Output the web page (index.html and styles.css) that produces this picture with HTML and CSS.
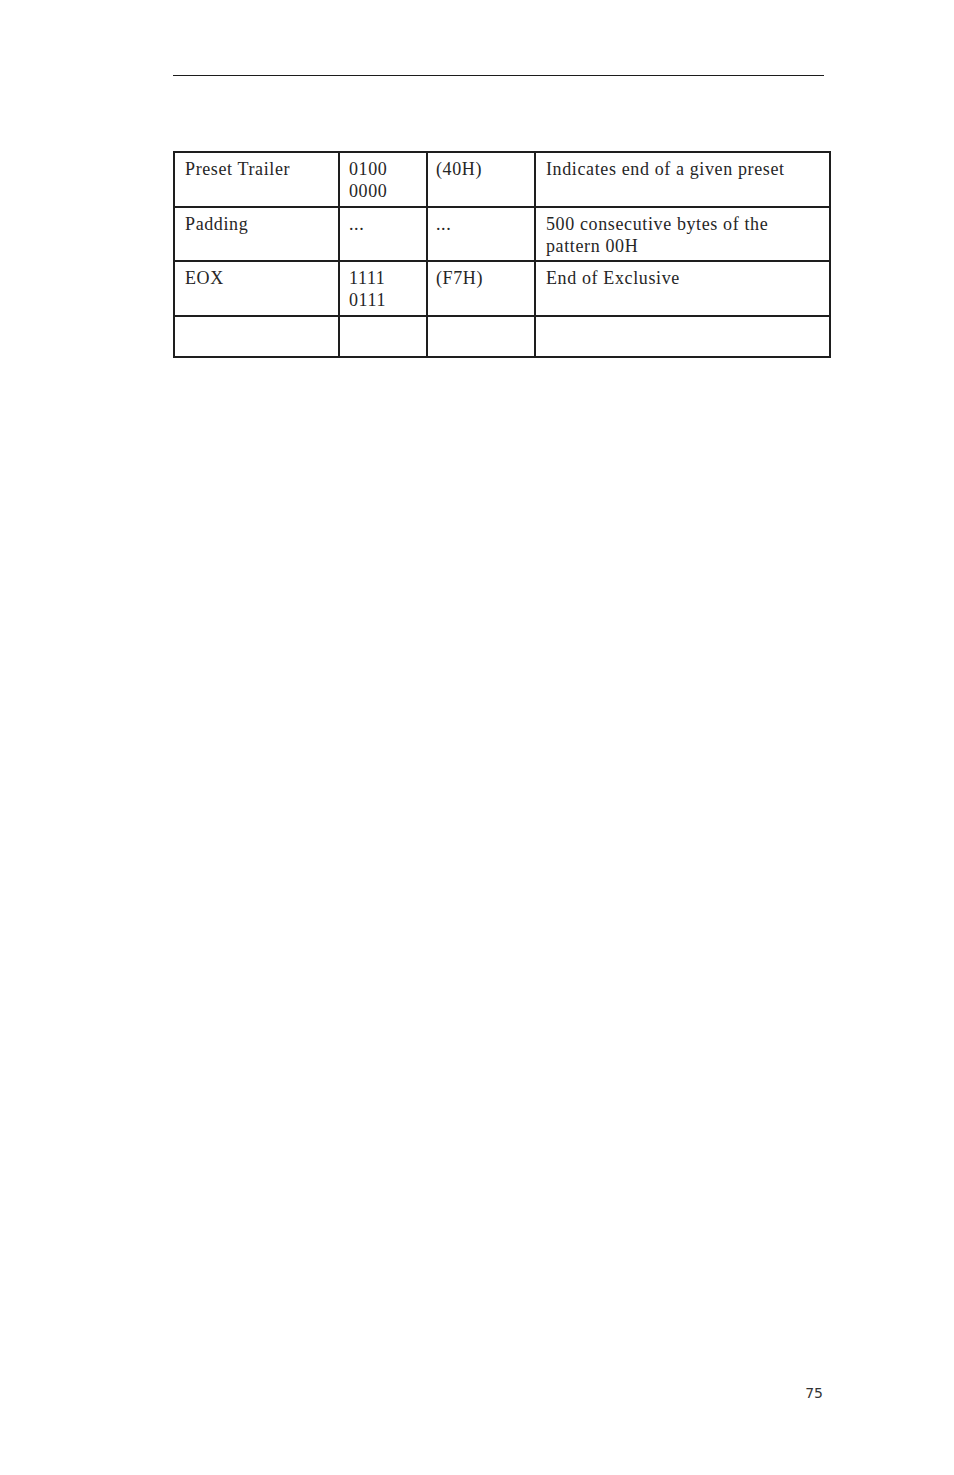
FILE: index.html
```html
<!DOCTYPE html>
<html lang="en">
<head>
<meta charset="utf-8">
<title>Page 75</title>
<link rel="stylesheet" href="styles.css">
</head>
<body>
<div class="page">
  <div class="content">
    <hr class="rule">
    <div class="sysex-table" role="table">
      <div class="cell c1" role="cell">Preset Trailer</div>
      <div class="cell c2" role="cell">0100<br>0000</div>
      <div class="cell c3" role="cell">(40H)</div>
      <div class="cell c4" role="cell">Indicates end of a given preset</div>

      <div class="cell c1" role="cell">Padding</div>
      <div class="cell c2" role="cell">...</div>
      <div class="cell c3" role="cell">...</div>
      <div class="cell c4" role="cell">500 consecutive bytes of the<br>pattern 00H</div>

      <div class="cell c1" role="cell">EOX</div>
      <div class="cell c2" role="cell">1111<br>0111</div>
      <div class="cell c3" role="cell">(F7H)</div>
      <div class="cell c4" role="cell">End of Exclusive</div>

      <div class="cell c1" role="cell"></div>
      <div class="cell c2" role="cell"></div>
      <div class="cell c3" role="cell"></div>
      <div class="cell c4" role="cell"></div>
    </div>
  </div>
  <footer class="page-number">75</footer>
</div>
</body>
</html>
```
FILE: styles.css
```css
html, body {
  margin: 0;
  padding: 0;
  background: #ffffff;
}

.page {
  width: 954px;
  height: 1475px;
  display: flex;
  flex-direction: column;
  box-sizing: border-box;
  padding-bottom: 74px;
}

.content {
  padding-left: 173px;
  padding-top: 75px;
}

.rule {
  margin: 0;
  width: 651px;
  height: 0;
  border: none;
  border-top: 1px solid #1c1c1c;
}

.sysex-table {
  margin-top: 75px;
  display: grid;
  grid-template-columns: 165px 88px 108px 295px;
  grid-template-rows: 55px 54px 55px 41px;
  width: 658px;
  box-sizing: border-box;
  border-top: 2px solid #1e1e1e;
  border-left: 2px solid #1e1e1e;
  font-family: "Liberation Serif", "Times New Roman", serif;
  font-size: 18px;
  line-height: 22px;
  letter-spacing: 0.62px;
  color: #262626;
}

.cell {
  box-sizing: border-box;
  border-right: 2px solid #1e1e1e;
  border-bottom: 2px solid #1e1e1e;
  padding: 5px 6px 0 8px;
  overflow: hidden;
}

.cell.c1 {
  padding-left: 10px;
}

.cell.c2 {
  padding-left: 9px;
}

.cell.c3 {
  padding-left: 8px;
}

.cell.c4 {
  padding-left: 10px;
}

.page-number {
  margin-top: auto;
  width: 823px;
  text-align: right;
  font-family: "DejaVu Sans", "Verdana", sans-serif;
  font-size: 14px;
  line-height: 16px;
  color: #333333;
}
```
